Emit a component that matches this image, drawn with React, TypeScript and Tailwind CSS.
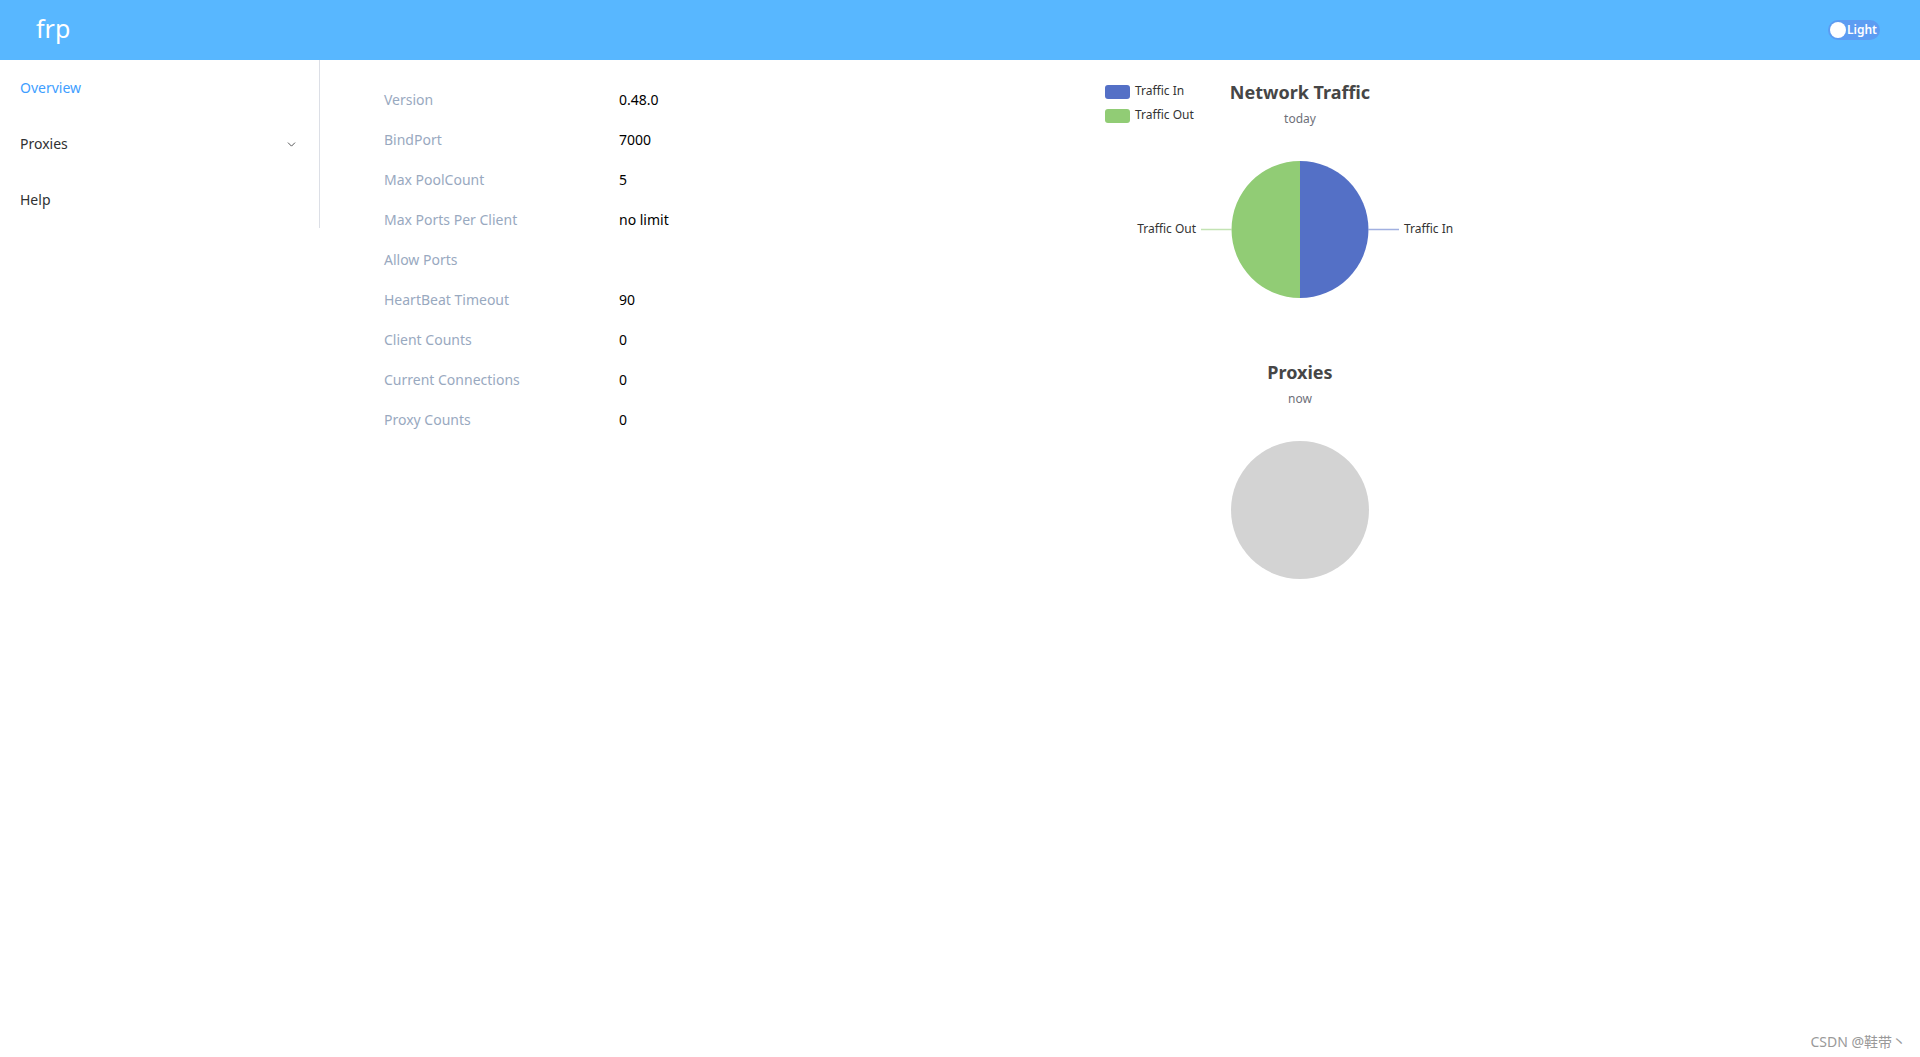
import { ChevronDown } from "lucide-react";

const stats: [string, string][] = [
  ["Version", "0.48.0"],
  ["BindPort", "7000"],
  ["Max PoolCount", "5"],
  ["Max Ports Per Client", "no limit"],
  ["Allow Ports", ""],
  ["HeartBeat Timeout", "90"],
  ["Client Counts", "0"],
  ["Current Connections", "0"],
  ["Proxy Counts", "0"],
];

const font = { fontFamily: "'Noto Sans', 'Noto Sans CJK SC', sans-serif" };

function TrafficChart() {
  return (
    <svg width="400" height="280" viewBox="0 0 400 280" className="block">
      <rect x="5" y="7" width="25" height="14" rx="3" fill="#5470c6" />
      <text x="35" y="14" dominantBaseline="middle" fontSize="12" fill="#333">
        Traffic In
      </text>
      <rect x="5" y="31" width="25" height="14" rx="3" fill="#91cc75" />
      <text x="35" y="38" dominantBaseline="middle" fontSize="12" fill="#333">
        Traffic Out
      </text>
      <text x="200" y="16.5" textAnchor="middle" dominantBaseline="middle" fontSize="18" fontWeight="bold" fill="#464646">
        Network Traffic
      </text>
      <text x="200" y="41.5" textAnchor="middle" dominantBaseline="middle" fontSize="12" fill="#6e7079">
        today
      </text>
      {/* 半分ずつの円 */}
      <path d="M200 83 A68.5 68.5 0 0 1 200 220 Z" fill="#5470c6" />
      <path d="M200 220 A68.5 68.5 0 0 1 200 83 Z" fill="#91cc75" />
      <line x1="268.5" y1="151.5" x2="299" y2="151.5" stroke="#5470c6" strokeOpacity="0.55" strokeWidth="1.5" />
      <line x1="101" y1="151.5" x2="131.5" y2="151.5" stroke="#91cc75" strokeOpacity="0.55" strokeWidth="1.5" />
      <text x="304" y="152" dominantBaseline="middle" fontSize="12" fill="#333">
        Traffic In
      </text>
      <text x="96" y="152" textAnchor="end" dominantBaseline="middle" fontSize="12" fill="#333">
        Traffic Out
      </text>
    </svg>
  );
}

function ProxiesChart() {
  return (
    <svg width="400" height="280" viewBox="0 0 400 280" className="block">
      <text x="200" y="16.5" textAnchor="middle" dominantBaseline="middle" fontSize="18" fontWeight="bold" fill="#464646">
        Proxies
      </text>
      <text x="200" y="41.5" textAnchor="middle" dominantBaseline="middle" fontSize="12" fill="#6e7079">
        now
      </text>
      <circle cx="200" cy="152" r="69" fill="#d3d3d3" />
    </svg>
  );
}

export default function App() {
  return (
    <div className="min-h-screen bg-white flex flex-col" style={font}>
      {/* ヘッダー */}
      <header className="h-[60px] bg-[#58b7ff] flex items-center justify-between pl-[36px] pr-[40px]">
        <span className="text-[25px] leading-none text-white pb-[4px]">frp</span>
        <div className="flex items-center h-[20px] w-[52px] rounded-full bg-[#5c9cf2] pl-[2px] gap-[1px]">
          <span className="w-[16px] h-[16px] rounded-full bg-white"></span>
          <span className="text-[12px] leading-none text-white font-semibold">Light</span>
        </div>
      </header>

      <div className="flex flex-1 relative">
        {/* サイドメニュー */}
        <nav className="w-[320px] h-[168px] border-r border-[#dcdfe6] text-[14px] shrink-0">
          <div className="h-[56px] flex items-center px-[20px] pb-[2px] text-[#409eff]">Overview</div>
          <div className="h-[56px] flex items-center justify-between pl-[20px] pr-[21px] pb-[2px] text-[#303133]">
            <span>Proxies</span>
            <ChevronDown size={13} strokeWidth={1.5} className="text-[#303133] mt-[2px]" />
          </div>
          <div className="h-[56px] flex items-center px-[20px] pb-[2px] text-[#303133]">Help</div>
        </nav>

        {/* 概要 */}
        <main className="flex pl-[64px] pt-[19px]">
          <div className="w-[716px] text-[14px]">
            {stats.map(([label, value]) => (
              <div key={label} className="h-[40px] flex items-center">
                <span className="w-[235px] text-[#99a9bf]">{label}</span>
                <span className="text-black">{value}</span>
              </div>
            ))}
          </div>
          <div className="w-[400px] -mt-[1px] flex flex-col">
            <TrafficChart />
            <ProxiesChart />
          </div>
        </main>

        <div className="absolute right-[14px] bottom-[5px] text-[14px] text-[#999]">CSDN @鞋带丶</div>
      </div>
    </div>
  );
}
